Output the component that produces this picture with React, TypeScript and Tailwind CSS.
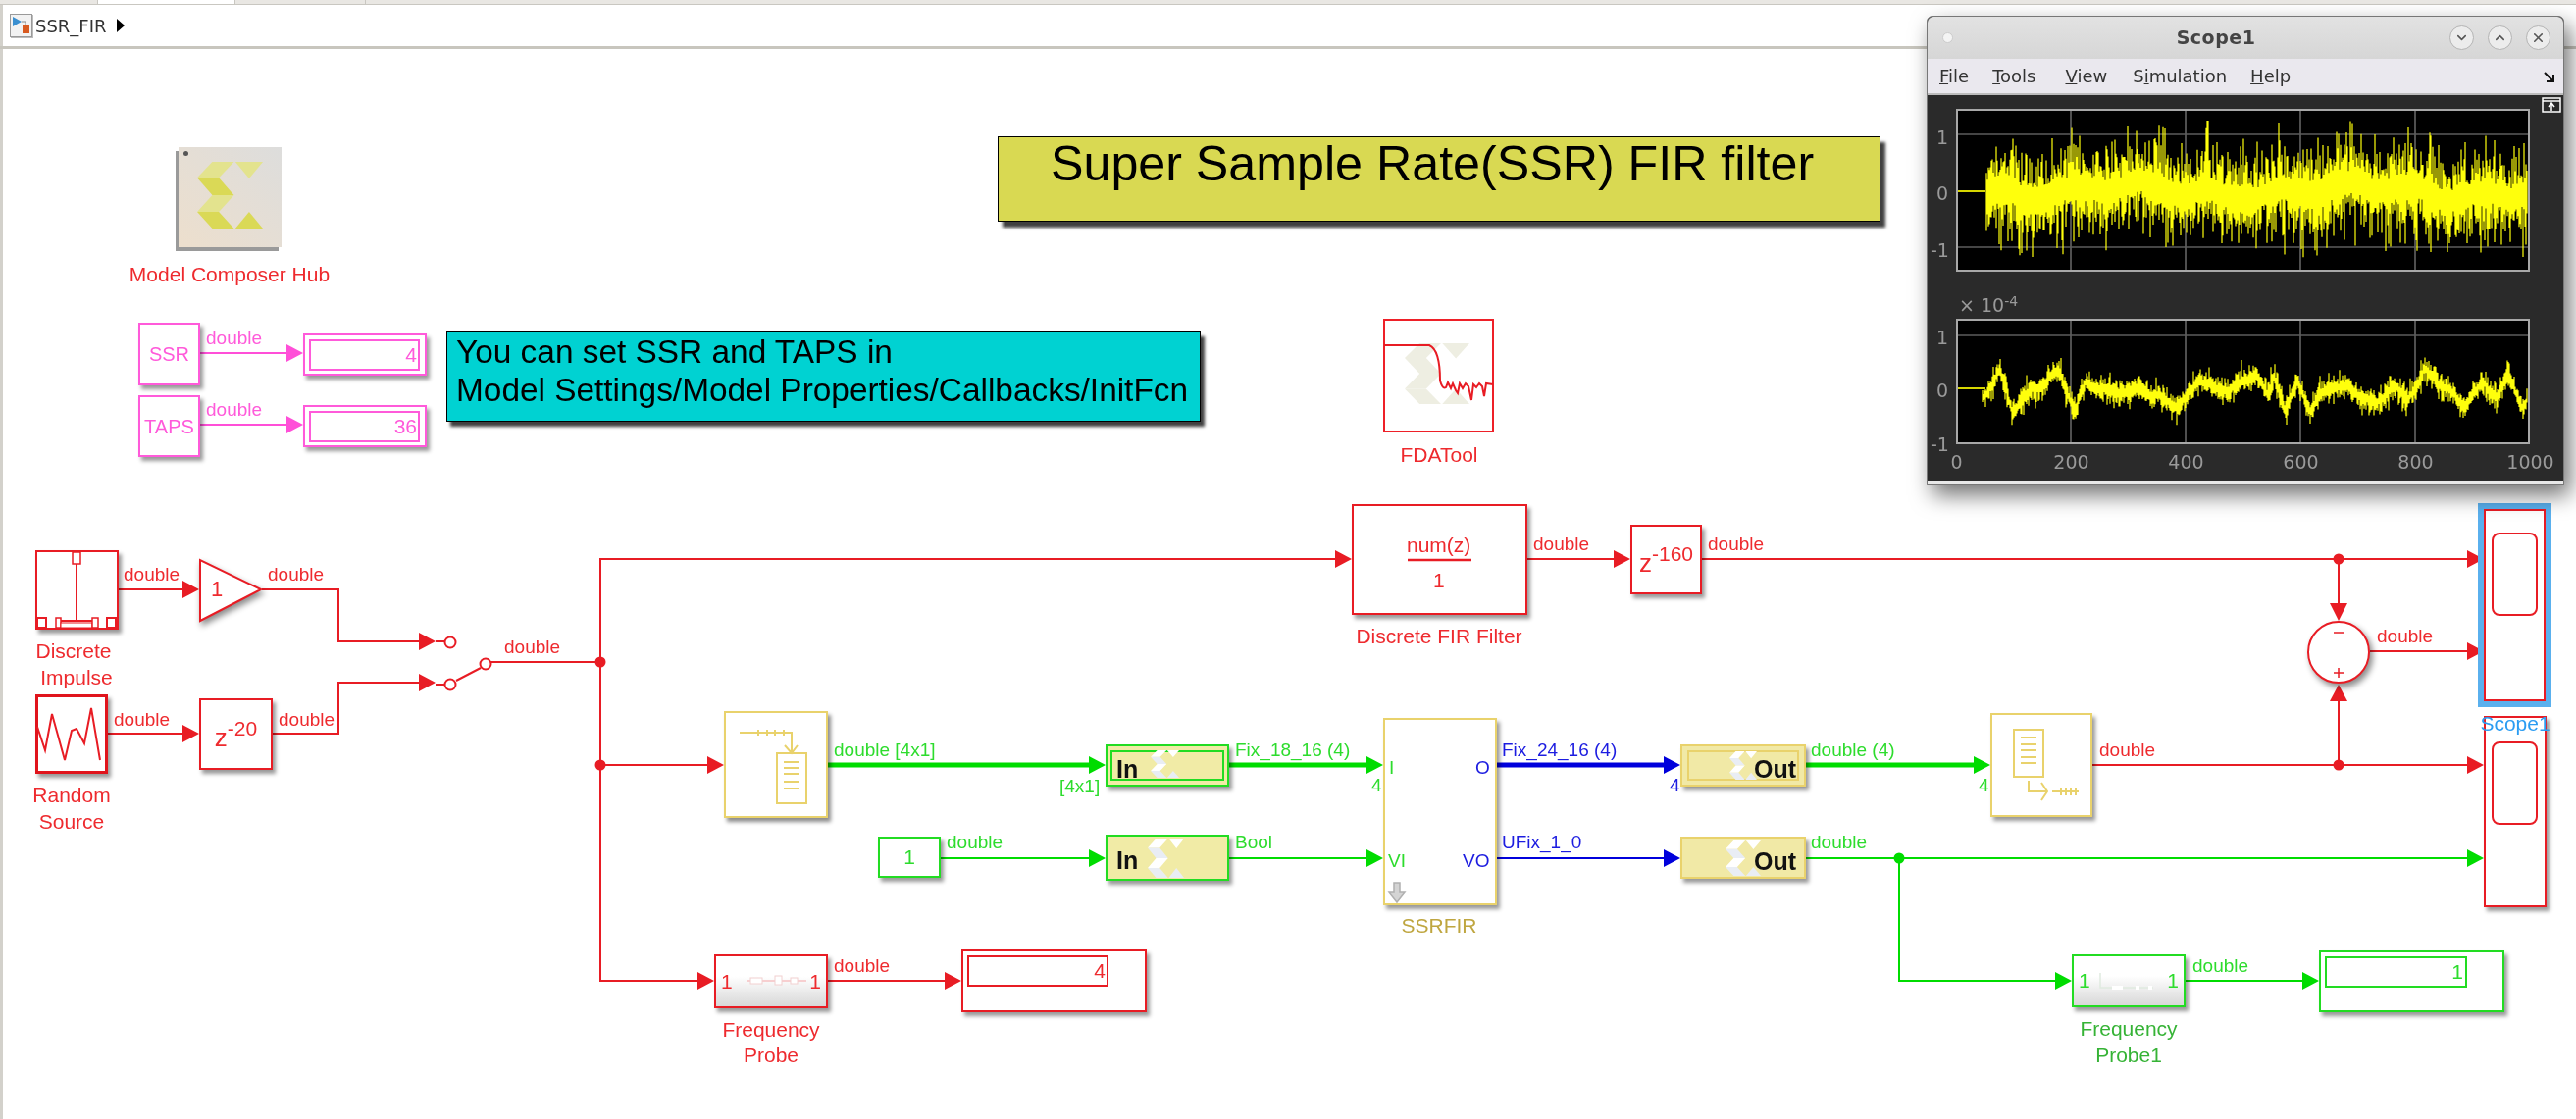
import React from 'react';
import { ChevronDown, ChevronUp, X } from 'lucide-react';

const RED = '#e81c24';
const GREEN = '#00dc00';
const BLUE = '#0000dc';
const PINK = '#ff4fd8';
const GOLD = '#e9d26c';

const tRed = 'text-[#ee2a2e]';
const tGreen = 'text-[#2ddc2d]';
const tBlue = 'text-[#1c1ce0]';
const tPink = 'text-[#ff5ada]';

type Wire = { d: string; c: string; w?: number };

const wires: Wire[] = [
  { d: 'M204 360H292', c: PINK },
  { d: 'M204 433H292', c: PINK },
  { d: 'M121 601H187', c: RED },
  { d: 'M267 601H345V654H428', c: RED },
  { d: 'M110 748H187', c: RED },
  { d: 'M278 748H345V696H428', c: RED },
  { d: 'M501 675H612', c: RED },
  { d: 'M1361 570H612V1000H711', c: RED },
  { d: 'M612 780H722', c: RED },
  { d: 'M844 1000H963', c: RED },
  { d: 'M1557 570H1645', c: RED },
  { d: 'M1735 570H2515', c: RED },
  { d: 'M2384 570V617', c: RED },
  { d: 'M2384 780V714', c: RED },
  { d: 'M2416 664H2515', c: RED },
  { d: 'M2133 780H2515', c: RED },
  { d: 'M959 875H1110', c: GREEN },
  { d: 'M1253 875H1394', c: GREEN },
  { d: 'M1841 875H2515', c: GREEN },
  { d: 'M1936 875V1000H2096', c: GREEN },
  { d: 'M2228 1000H2347', c: GREEN },
  { d: 'M844 780H1110', c: GREEN, w: 5 },
  { d: 'M1253 780H1394', c: GREEN, w: 5 },
  { d: 'M1841 780H2012', c: GREEN, w: 5 },
  { d: 'M1526 780H1698', c: BLUE, w: 5 },
  { d: 'M1526 875H1698', c: BLUE },
];

const rightArrows: [number, number, string][] = [
  [309, 360, PINK], [309, 433, PINK],
  [203, 601, RED], [203, 748, RED], [444, 654, RED], [444, 696, RED],
  [738, 780, RED], [728, 1000, RED], [980, 1000, RED], [1378, 570, RED],
  [1662, 570, RED], [2532, 570, RED], [2532, 664, RED], [2532, 780, RED],
  [1127, 780, GREEN], [1127, 875, GREEN], [1410, 780, GREEN], [1410, 875, GREEN],
  [2029, 780, GREEN], [2532, 875, GREEN], [2112, 1000, GREEN], [2364, 1000, GREEN],
  [1713, 780, BLUE], [1713, 875, BLUE],
];

const dots: [number, number, string][] = [
  [612, 675, RED], [612, 780, RED], [2384, 570, RED], [2384, 780, RED], [1936, 875, GREEN],
];

// seeded so every render gives the same trace
function makeRandom(seed: number) {
  let s = seed;
  return () => {
    s = (s * 1664525 + 1013904223) % 4294967296;
    return s / 4294967296;
  };
}

function gauss(rnd: () => number) {
  return (rnd() + rnd() + rnd() + rnd() + rnd() + rnd() - 3) / 0.707;
}

function topTrace() {
  const rnd = makeRandom(11);
  let d = '';
  for (let x = 31; x < 583; x += 1) {
    const slow = 6 * Math.sin(x / 37) + 5 * Math.sin(x / 11);
    const up = 84 + slow - 10 - Math.abs(gauss(rnd)) * 21;
    const down = 84 + slow + 10 + Math.abs(gauss(rnd)) * 21;
    d += `M${x} ${Math.max(12, up).toFixed(1)}V${Math.min(154, down).toFixed(1)}`;
  }
  return d;
}

const wander: [number, number][] = [
  [165, 1215], [205, 1140], [235, 1250], [280, 1195], [345, 1140], [385, 1250], [410, 1170], [470, 1200],
  [540, 1190], [630, 1240], [680, 1160], [720, 1195], [780, 1175], [812, 1140], [840, 1215], [855, 1150],
  [880, 1250], [910, 1170], [940, 1245], [990, 1175], [1050, 1200], [1095, 1235], [1135, 1175], [1165, 1225],
  [1210, 1140], [1260, 1185], [1300, 1235], [1350, 1175], [1380, 1210], [1410, 1155], [1445, 1245], [1460, 1190],
];

function bottomTrace() {
  const rnd = makeRandom(29);
  const pts = wander.map(([zx, zy]) => [zx / 2.32 - 44, 71 + (zy / 3 - 325 - 71) * 1.1]);
  let d = '';
  let seg = 0;
  for (let x = 27; x < 583; x += 1) {
    while (seg < pts.length - 2 && x > pts[seg + 1][0]) seg += 1;
    const [x0, y0] = pts[seg];
    const [x1, y1] = pts[seg + 1];
    const base = y0 + ((y1 - y0) * (x - x0)) / (x1 - x0) + 2.5 * Math.sin(x / 4.3);
    d += `M${x} ${(base - 3 - Math.abs(gauss(rnd)) * 6).toFixed(1)}V${(base + 3 + Math.abs(gauss(rnd)) * 6).toFixed(1)}`;
  }
  return d;
}

const traceA = topTrace();
const traceB = bottomTrace();

function Mark({ light, dark, className }: { light: string; dark: string; className: string }) {
  return (
    <svg viewBox="0 0 100 100" preserveAspectRatio="none" className={'absolute ' + className}>
      <polygon points="23,0 56,0 33,24 0,24" fill={light} />
      <polygon points="0,24 33,24 56,50 23,50" fill={dark} />
      <polygon points="23,50 56,50 33,75 0,75" fill={light} />
      <polygon points="0,75 33,75 56,100 23,100" fill={dark} />
      <polygon points="58,0 100,0 79,25" fill={light} />
      <polygon points="58,100 100,100 79,75" fill={dark} />
    </svg>
  );
}

function Lb({ c, children }: { c: string; children: React.ReactNode }) {
  return <span className={'absolute -translate-y-1/2 whitespace-nowrap leading-none text-[19px] ' + c}>{children}</span>;
}

function Cap({ c, children }: { c: string; children: React.ReactNode }) {
  return (
    <span className={'absolute -translate-x-1/2 -translate-y-1/2 whitespace-nowrap leading-none text-[21px] ' + c}>
      {children}
    </span>
  );
}

function Block({ c, children }: { c: string; children?: React.ReactNode }) {
  return <div className={'absolute bg-white shadow-[3px_4px_4px_rgba(0,0,0,0.4)] ' + c}>{children}</div>;
}

function Diagram() {
  return (
    <div className="absolute inset-0">
      <svg width="2626" height="1141" className="absolute inset-0" fill="none">
        {wires.map((w) => (
          <path key={w.d} d={w.d} stroke={w.c} strokeWidth={w.w ?? 2} />
        ))}
        {rightArrows.map(([x, y, c]) => (
          <polygon key={`${x}-${y}`} points={`${x - 17},${y - 9} ${x},${y} ${x - 17},${y + 9}`} fill={c} />
        ))}
        <polygon points="2375,615 2393,615 2384,633" fill={RED} />
        <polygon points="2375,715 2393,715 2384,698" fill={RED} />
        {dots.map(([x, y, c]) => (
          <circle key={`${x}-${y}`} cx={x} cy={y} r="5.5" fill={c} />
        ))}
        <path d="M444 654H453M444 698H453M465 694L490 681M501 675H499" stroke={RED} strokeWidth="2" />
        <circle cx="459" cy="655" r="5.5" fill="#fff" stroke={RED} strokeWidth="2" />
        <circle cx="459" cy="698" r="5.5" fill="#fff" stroke={RED} strokeWidth="2" />
        <circle cx="495" cy="677" r="5.5" fill="#fff" stroke={RED} strokeWidth="2" />
      </svg>

      {/* Model Composer Hub */}
      <div className="absolute left-[182px] top-[150px] w-[105px] h-[102px] bg-gradient-to-tr from-[#eddfcd] to-[#dddddc] shadow-[-3px_4px_0_#9a9a9a]">
        <span className="absolute left-[5px] top-[4px] w-[5px] h-[5px] rounded-full bg-[#555]" />
      </div>
      <Mark light="#e3e38e" dark="#dad956" className="left-[201px] top-[165px] w-[67px] h-[68px]" />
      <Cap c={'left-[234px] top-[279px] ' + tRed}>Model Composer Hub</Cap>

      {/* SSR and TAPS */}
      <Block c="left-[141px] top-[329px] w-[63px] h-[64px] border-2 border-[#ff5ada] flex items-center justify-center">
        <span className={'text-[20px] ' + tPink}>SSR</span>
      </Block>
      <Block c="left-[141px] top-[403px] w-[63px] h-[63px] border-2 border-[#ff5ada] flex items-center justify-center">
        <span className={'text-[20px] ' + tPink}>TAPS</span>
      </Block>
      <Lb c={'left-[210px] top-[344px] ' + tPink}>double</Lb>
      <Lb c={'left-[210px] top-[417px] ' + tPink}>double</Lb>
      <Block c="left-[309px] top-[340px] w-[126px] h-[43px] border-2 border-[#ff5ada] pl-[4px] pt-[4px]">
        <div className={'w-[113px] h-[32px] border-2 border-[#ff5ada] flex items-center justify-end pr-[1px] text-[21px] ' + tPink}>4</div>
      </Block>
      <Block c="left-[309px] top-[413px] w-[126px] h-[43px] border-2 border-[#ff5ada] pl-[4px] pt-[4px]">
        <div className={'w-[113px] h-[32px] border-2 border-[#ff5ada] flex items-center justify-end pr-[1px] text-[21px] ' + tPink}>36</div>
      </Block>

      {/* annotations */}
      <div className="absolute left-[455px] top-[338px] w-[769px] h-[92px] bg-[#00d2d2] border border-black shadow-[4px_5px_3px_rgba(0,0,0,0.75)] pl-[9px] text-[33.4px] leading-[39px] text-black whitespace-nowrap">
        <p>You can set SSR and TAPS in</p>
        <p>Model Settings/Model Properties/Callbacks/InitFcn</p>
      </div>
      <div className="absolute left-[1017px] top-[139px] w-[900px] h-[87px] bg-[#d9d952] border border-black shadow-[5px_6px_3px_rgba(0,0,0,0.75)] pl-[53px] text-[50.2px] leading-[54px] text-black whitespace-nowrap">
        Super Sample Rate(SSR) FIR filter
      </div>

      {/* FDATool */}
      <Block c="left-[1410px] top-[325px] w-[113px] h-[116px] border-2 border-[#ee2028] !shadow-none" />
      <Mark light="#eeeee2" dark="#eeeee2" className="left-[1432px] top-[350px] w-[66px] h-[62px]" />
      <Cap c={'left-[1467px] top-[463px] ' + tRed}>FDATool</Cap>

      {/* sources */}
      <Block c="left-[36px] top-[561px] w-[85px] h-[81px] border-2 border-[#e81c24]" />
      <Cap c={'left-[75px] top-[663px] ' + tRed}>Discrete</Cap>
      <Cap c={'left-[78px] top-[690px] ' + tRed}>Impulse</Cap>
      <Block c="left-[36px] top-[708px] w-[74px] h-[81px] border-[3px] border-[#e0141c]" />
      <Cap c={'left-[73px] top-[810px] ' + tRed}>Random</Cap>
      <Cap c={'left-[73px] top-[837px] ' + tRed}>Source</Cap>
      <Lb c={'left-[126px] top-[585px] ' + tRed}>double</Lb>
      <Lb c={'left-[273px] top-[585px] ' + tRed}>double</Lb>
      <Lb c={'left-[116px] top-[733px] ' + tRed}>double</Lb>
      <Lb c={'left-[284px] top-[733px] ' + tRed}>double</Lb>
      <Lb c={'left-[514px] top-[659px] ' + tRed}>double</Lb>

      <Block c="left-[203px] top-[712px] w-[75px] h-[73px] border-2 border-[#e81c24] flex items-center justify-center">
        <span className={'text-[26px] leading-none mt-[6px] ' + tRed}>
          z<sup className="text-[21px] -top-[11px]">-20</sup>
        </span>
      </Block>

      {/* upper path */}
      <Block c="left-[1378px] top-[514px] w-[179px] h-[113px] border-2 border-[#e81c24]" />
      <Lb c={'left-[1434px] top-[555px] text-[21px] ' + tRed}>num(z)</Lb>
      <Lb c={'left-[1461px] top-[591px] text-[21px] ' + tRed}>1</Lb>
      <Cap c={'left-[1467px] top-[648px] ' + tRed}>Discrete FIR Filter</Cap>
      <Lb c={'left-[1563px] top-[554px] ' + tRed}>double</Lb>
      <Block c="left-[1662px] top-[535px] w-[73px] h-[71px] border-2 border-[#e81c24] flex items-center justify-center">
        <span className={'text-[26px] leading-none mt-[6px] whitespace-nowrap ' + tRed}>
          z<sup className="text-[21px] -top-[11px]">-160</sup>
        </span>
      </Block>
      <Lb c={'left-[1741px] top-[554px] ' + tRed}>double</Lb>

      {/* gateway in path */}
      <Block c="left-[738px] top-[725px] w-[106px] h-[109px] border-2 border-[#e9d26c] shadow-[3px_4px_4px_rgba(0,0,0,0.45)]" />
      <Lb c={'left-[850px] top-[764px] ' + tGreen}>double [4x1]</Lb>
      <Block c="left-[895px] top-[853px] w-[64px] h-[42px] border-2 border-[#22dc22] flex items-center justify-center">
        <span className={'text-[21px] ' + tGreen}>1</span>
      </Block>
      <Lb c={'left-[965px] top-[858px] ' + tGreen}>double</Lb>
      <Lb c={'left-[1080px] top-[801px] ' + tGreen}>[4x1]</Lb>

      <Block c="left-[1127px] top-[759px] w-[126px] h-[43px] border-2 border-[#22dc22] !bg-[#f1eba6] pl-[3px] pt-[4px]">
        <div className="w-[116px] h-[31px] border-2 border-[#22dc22]" />
      </Block>
      <Mark light="#ffffff" dark="#e9edf4" className="left-[1173px] top-[765px] w-[29px] h-[28px]" />
      <Lb c="left-[1138px] top-[784px] text-[25px] font-bold text-[#111]">In</Lb>
      <Block c="left-[1127px] top-[851px] w-[126px] h-[47px] border-2 border-[#22dc22] !bg-[#f1eba6]" />
      <Mark light="#ffffff" dark="#e9edf4" className="left-[1170px] top-[855px] w-[37px] h-[40px]" />
      <Lb c="left-[1138px] top-[877px] text-[25px] font-bold text-[#111]">In</Lb>
      <Lb c={'left-[1259px] top-[764px] ' + tGreen}>Fix_18_16 (4)</Lb>
      <Lb c={'left-[1259px] top-[858px] ' + tGreen}>Bool</Lb>

      {/* SSRFIR */}
      <Block c="left-[1410px] top-[732px] w-[116px] h-[191px] border-2 border-[#e9d26c]" />
      <Lb c={'left-[1416px] top-[782px] ' + tGreen}>I</Lb>
      <Lb c={'left-[1398px] top-[800px] ' + tGreen}>4</Lb>
      <Lb c={'left-[1415px] top-[877px] ' + tGreen}>VI</Lb>
      <Lb c={'left-[1504px] top-[782px] ' + tBlue}>O</Lb>
      <Lb c={'left-[1491px] top-[877px] ' + tBlue}>VO</Lb>
      <Cap c="left-[1467px] top-[943px] text-[#bfa640]">SSRFIR</Cap>
      <Lb c={'left-[1531px] top-[764px] ' + tBlue}>Fix_24_16 (4)</Lb>
      <Lb c={'left-[1531px] top-[858px] ' + tBlue}>UFix_1_0</Lb>
      <Lb c={'left-[1702px] top-[800px] ' + tBlue}>4</Lb>

      <Block c="left-[1713px] top-[759px] w-[128px] h-[43px] border-2 border-[#e9d26c] !bg-[#f1e9a6] pl-[5px] pt-[4px]">
        <div className="w-[114px] h-[31px] border-2 border-[#e9d26c]" />
      </Block>
      <Mark light="#ffffff" dark="#e9edf4" className="left-[1763px] top-[766px] w-[28px] h-[29px]" />
      <Lb c="left-[1788px] top-[784px] text-[25px] font-bold text-[#111]">Out</Lb>
      <Block c="left-[1713px] top-[853px] w-[128px] h-[43px] border-2 border-[#e9d26c] !bg-[#f1e9a6]" />
      <Mark light="#ffffff" dark="#e9edf4" className="left-[1759px] top-[857px] w-[36px] h-[36px]" />
      <Lb c="left-[1788px] top-[878px] text-[25px] font-bold text-[#111]">Out</Lb>
      <Lb c={'left-[1846px] top-[764px] ' + tGreen}>double (4)</Lb>
      <Lb c={'left-[1846px] top-[858px] ' + tGreen}>double</Lb>
      <Lb c={'left-[2017px] top-[800px] ' + tGreen}>4</Lb>

      <Block c="left-[2029px] top-[727px] w-[104px] h-[106px] border-2 border-[#e9d26c]" />
      <Lb c={'left-[2140px] top-[764px] ' + tRed}>double</Lb>

      {/* probes */}
      <Block c="left-[728px] top-[973px] w-[116px] h-[55px] border-2 border-[#e81c24] !bg-transparent bg-gradient-to-b from-white from-40% to-[#d8d8d8] flex items-center justify-between px-[5px]">
        <span className={'text-[21px] ' + tRed}>1</span>
        <span className={'text-[21px] ' + tRed}>1</span>
      </Block>
      <Cap c={'left-[786px] top-[1049px] ' + tRed}>Frequency</Cap>
      <Cap c={'left-[786px] top-[1075px] ' + tRed}>Probe</Cap>
      <Lb c={'left-[850px] top-[984px] ' + tRed}>double</Lb>
      <Block c="left-[980px] top-[968px] w-[189px] h-[64px] border-2 border-[#e81c24] pl-[4px] pt-[4px]">
        <div className={'w-[144px] h-[32px] border-2 border-[#e81c24] flex items-center justify-end pr-[1px] text-[21px] ' + tRed}>4</div>
      </Block>
      <Block c="left-[2112px] top-[973px] w-[116px] h-[54px] border-2 border-[#22dc22] !bg-transparent bg-gradient-to-b from-white from-40% to-[#d8d8d8] flex items-center justify-between px-[5px]">
        <span className={'text-[21px] ' + tGreen}>1</span>
        <span className={'text-[21px] ' + tGreen}>1</span>
      </Block>
      <Cap c="left-[2170px] top-[1048px] text-[#36b336]">Frequency</Cap>
      <Cap c="left-[2170px] top-[1075px] text-[#36b336]">Probe1</Cap>
      <Lb c={'left-[2235px] top-[984px] ' + tGreen}>double</Lb>
      <Block c="left-[2364px] top-[969px] w-[189px] h-[63px] border-2 border-[#22dc22] pl-[4px] pt-[4px]">
        <div className={'w-[145px] h-[32px] border-2 border-[#22dc22] flex items-center justify-end pr-[2px] text-[21px] ' + tGreen}>1</div>
      </Block>

      {/* scopes */}
      <Block c="left-[2532px] top-[730px] w-[64px] h-[195px] border-2 border-[#e81c24] pl-[6px] pt-[24px]">
        <div className="w-[47px] h-[85px] border-2 border-[#e81c24] rounded-[8px]" />
      </Block>
      <div className="absolute left-[2526px] top-[513px] w-[75px] h-[208px] border-[6px] border-[#5ab0ee]">
        <div className="w-full h-full border-2 border-[#e81c24] bg-white pl-[6px] pt-[22px]">
          <div className="w-[47px] h-[85px] border-2 border-[#e81c24] rounded-[8px]" />
        </div>
      </div>
      <Cap c="left-[2564px] top-[737px] text-[#2b9cf2]">Scope1</Cap>
      <Lb c={'left-[2423px] top-[648px] ' + tRed}>double</Lb>

      {/* block icons */}
      <svg width="2626" height="1141" className="absolute inset-0 pointer-events-none" fill="none">
        {/* gain */}
        <polygon points="204,571 204,633 266,601" fill="#fff" stroke={RED} strokeWidth="2" className="drop-shadow-[2px_4px_3px_rgba(0,0,0,0.45)]" />
        {/* sum */}
        <circle cx="2384" cy="665" r="31" fill="#fff" stroke={RED} strokeWidth="2" className="drop-shadow-[3px_4px_3px_rgba(0,0,0,0.45)]" />
        <path d="M2379 645H2389M2379 686H2389M2384 681V691" stroke={RED} strokeWidth="1.5" />
        {/* num(z) bar */}
        <path d="M1435 571H1500" stroke={RED} strokeWidth="2.5" />
        {/* discrete impulse */}
        <path d="M78 575V633M57 633H100" stroke={RED} strokeWidth="2" />
        <rect x="74" y="563" width="8" height="12" stroke={RED} strokeWidth="1.5" fill="#fff" />
        <rect x="38" y="630" width="9" height="10" stroke={RED} strokeWidth="2" fill="#fff" />
        <rect x="57" y="630" width="5" height="10" stroke={RED} strokeWidth="1.5" fill="#fff" />
        <rect x="62" y="635" width="32" height="5" stroke={RED} strokeWidth="1" fill="#fff" />
        <rect x="94" y="630" width="6" height="10" stroke={RED} strokeWidth="1.5" fill="#fff" />
        <rect x="109" y="630" width="9" height="10" stroke={RED} strokeWidth="2" fill="#fff" />
        {/* random source */}
        <polyline points="38,741 46,765 53,728 66,775 73,745 78,743 86,758 93,722 102,775" stroke={RED} strokeWidth="2" />
        {/* fda curve */}
        <path
          d="M1411 352H1457C1464 355 1468 368 1468 388C1469 392 1471 397 1474 395L1476 390L1479 396L1481 391L1484 398L1486 401L1488 391L1491 396L1494 391L1497 394L1500 408L1502 392L1505 395L1508 391L1511 394L1513 404L1515 391L1522 392"
          stroke={RED}
          strokeWidth="2"
        />
        {/* parallel to serial */}
        <path d="M754 747H807V767M773 744V750M782 744V750M790 744V750M799 744V750M800 760L807 768L813 760" stroke={GOLD} strokeWidth="2" />
        <rect x="792" y="768" width="30" height="51" stroke={GOLD} strokeWidth="2" />
        <path d="M799 777H815M799 783H815M799 789H815M799 797H815M799 804H815" stroke={GOLD} strokeWidth="2" />
        <rect x="2053" y="744" width="30" height="48" stroke={GOLD} strokeWidth="2" />
        <path d="M2060 752H2076M2060 759H2076M2060 765H2076M2060 772H2076M2060 778H2076" stroke={GOLD} strokeWidth="2" />
        <path d="M2068 796V807H2087M2081 798L2087 807L2081 816M2092 807H2119M2101 803V811M2106 803V811M2111 803V811M2116 803V811" stroke={GOLD} strokeWidth="2" />
        {/* cast arrow */}
        <polygon points="1421,900 1427,900 1427,910 1432,910 1424,920 1416,910 1421,910" fill="#d4d4d4" stroke="#b0b0b0" strokeWidth="1.5" />
        {/* probe sparklines */}
        <path d="M762 1000H822" stroke="#f7cfd0" strokeWidth="2" />
        <rect x="765" y="997" width="12" height="6" fill="#fff" stroke="#f2d0d0" />
        <rect x="790" y="995" width="7" height="9" fill="#fff" stroke="#f2d0d0" />
        <rect x="806" y="997" width="7" height="6" fill="#fff" stroke="#f2d0d0" />
        <path d="M2141 992V1007H2195" stroke="#dfeadf" strokeWidth="1.5" />
        <path d="M2153 1007H2164M2177 1007H2181M2190 1007H2194" stroke="#fff" strokeWidth="4" />
      </svg>
      <Lb c={'left-[215px] top-[601px] text-[22px] ' + tRed}>1</Lb>
    </div>
  );
}

function Plot({ c, h, grid, trace, zero }: { c: string; h: number; grid: number[]; trace: string; zero: number }) {
  return (
    <div className={'relative w-[585px] bg-black border-2 border-[#a8a8a8] ' + c}>
      <svg width="581" height={h - 4} viewBox={`2 2 581 ${h - 4}`} className="block" fill="none">
        {[117, 234, 351, 468].map((x) => (
          <path key={x} d={`M${x} 0V${h}`} stroke="#6a6a6a" strokeWidth="1.5" />
        ))}
        {grid.map((y) => (
          <path key={y} d={`M0 ${y}H585`} stroke="#5c5c5c" strokeWidth="1.5" />
        ))}
        <path d={`M0 ${zero}H30`} stroke="#d6d600" strokeWidth="2" />
        <path d={trace} stroke="#ffff0c" strokeWidth="1.2" />
      </svg>
    </div>
  );
}

function Tick({ c, children }: { c: string; children: React.ReactNode }) {
  return <span className={'absolute -translate-y-1/2 leading-none ' + c}>{children}</span>;
}

function WinBtn({ children }: { children: React.ReactNode }) {
  return (
    <span className="w-[25px] h-[25px] rounded-full border border-[#b4b4b4] bg-[#ececec] flex items-center justify-center text-[#555]">
      {children}
    </span>
  );
}

function ScopeWindow() {
  return (
    <div className="absolute left-[1964px] top-[16px] w-[650px] h-[479px] flex flex-col rounded-t-[6px] border border-[#777] bg-[#2a2a2a] shadow-[6px_10px_22px_rgba(0,0,0,0.55)] font-['DejaVu_Sans',sans-serif]">
      <div className="relative h-[43px] shrink-0 rounded-t-[6px] bg-gradient-to-b from-[#e2e2e2] to-[#d6d6d6] flex items-center pl-[15px] pr-[13px] gap-[14px]">
        <span className="w-[11px] h-[11px] rounded-full bg-[#f4f4f4] border border-[#ccc]" />
        <span className="flex-1 text-center text-[19px] font-bold text-[#444] pl-[30px] tracking-[0.5px]">Scope1</span>
        <WinBtn><ChevronDown size={15} strokeWidth={2.5} /></WinBtn>
        <WinBtn><ChevronUp size={15} strokeWidth={2.5} /></WinBtn>
        <WinBtn><X size={15} strokeWidth={2.5} /></WinBtn>
      </div>
      <div className="relative h-[37px] shrink-0 bg-[#eae8ee] border-b-2 border-[#bcbcbc] flex items-center text-[18px] text-[#333]">
        <span className="ml-[12px]"><u>F</u>ile</span>
        <span className="ml-[24px]"><u>T</u>ools</span>
        <span className="ml-[30px]"><u>V</u>iew</span>
        <span className="ml-[26px]">S<u>i</u>mulation</span>
        <span className="ml-[24px]"><u>H</u>elp</span>
        <svg width="14" height="14" viewBox="0 0 14 14" className="absolute right-[7px] top-[12px]" fill="none" stroke="#111" strokeWidth="2">
          <path d="M2 2L10 10M11 4V11H4" />
        </svg>
      </div>
      <div className="relative flex-1 pl-[29px] pt-[14px] text-[19px] text-[#9a9a9a]">
        <Plot c="h-[166px]" h={166} grid={[26, 141]} trace={traceA} zero={84} />
        <Plot c="h-[128px] mt-[48px]" h={128} grid={[17]} trace={traceB} zero={71} />
        <div className="w-[702px] -ml-[58px] mt-[9px] grid grid-cols-6 text-center leading-none">
          <span>0</span>
          <span>200</span>
          <span>400</span>
          <span>600</span>
          <span>800</span>
          <span>1000</span>
        </div>
        <Tick c="left-[9px] top-[43px]">1</Tick>
        <Tick c="left-[9px] top-[100px]">0</Tick>
        <Tick c="left-[3px] top-[158px]">-1</Tick>
        <Tick c="left-[9px] top-[247px]">1</Tick>
        <Tick c="left-[9px] top-[301px]">0</Tick>
        <Tick c="left-[3px] top-[356px]">-1</Tick>
        <span className="absolute left-[32px] top-[205px] whitespace-nowrap leading-none">
          × 10<sup className="text-[14px] -top-[6px]">-4</sup>
        </span>
        <svg width="20" height="16" viewBox="0 0 20 16" className="absolute right-[2px] top-[2px]" fill="none" stroke="#fff" strokeWidth="1.5">
          <rect x="1" y="1" width="18" height="14" />
          <path d="M1 4H19M10 14V7M7 10L10 6L13 10" />
        </svg>
      </div>
      <div className="h-[4px] shrink-0 bg-[#e8e8e8]" />
    </div>
  );
}

export default function App() {
  return (
    <div className="relative w-[2626px] h-[1141px] overflow-hidden bg-white blur-[0.6px] font-['Liberation_Sans',Arial,sans-serif]">
      {/* tab strip */}
      <div className="h-[5px] flex bg-[#e9e7e3] border-b border-[#c9c7c1]">
        <div className="w-[99px]" />
        <div className="w-[141px] bg-white border-x border-[#c9c7c1]" />
        <div className="w-[133px] border-r border-[#c9c7c1]" />
      </div>
      {/* breadcrumb */}
      <div className="h-[42px] pl-[7px] flex items-center border-l-[3px] border-[#d3d1cb] font-['DejaVu_Sans',sans-serif]">
        <span className="w-[23px] h-[24px] border border-[#9a9a9a] bg-[#f2f2f2] shadow-[1px_1px_0_#bbb]">
          <svg width="21" height="22" viewBox="0 0 21 22">
            <path d="M2 2L11 7L2 12Z" fill="#3a8fd0" />
            <path d="M11 7H15V11" fill="none" stroke="#888" />
            <rect x="12" y="11" width="7" height="8" fill="#d85a20" />
          </svg>
        </span>
        <span className="ml-[3px] text-[18px] text-[#333]">SSR_FIR</span>
        <span className="ml-[10px] w-0 h-0 border-y-[7px] border-y-transparent border-l-[8px] border-l-black" />
      </div>
      <div className="h-[3px] bg-[#c8c6be]" />
      <div className="absolute left-0 top-[50px] bottom-0 w-[3px] bg-[#d3d1cb]" />

      <Diagram />
      <ScopeWindow />
    </div>
  );
}
